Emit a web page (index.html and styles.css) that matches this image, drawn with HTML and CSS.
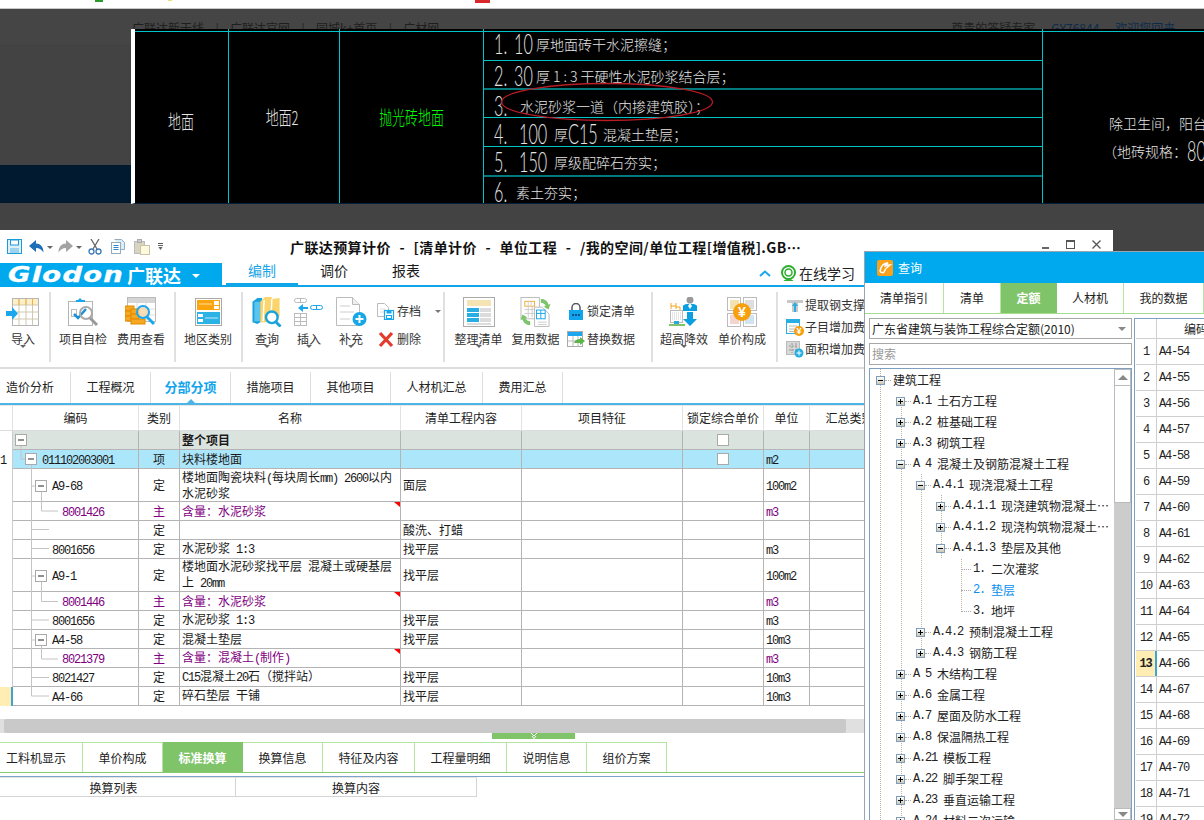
FILE: index.html
```html
<!DOCTYPE html>
<html lang="zh-CN">
<head>
<meta charset="utf-8">
<title>广联达预算计价</title>
<link rel="stylesheet" href="styles.css">
</head>
<body>
<div class="desktop">
  <div class="strip"><i class="dot g"></i><i class="dot y"></i><i class="dot r"></i></div>
  <div class="weblinks">
    <span>广联达新干线</span><b>|</b><span>广联达官网</span><b>|</b><span>同城k+首页</span><b>|</b><span>广材网</span>
    <span class="push">尊贵的答疑专家</span><span class="navy">GY76844</span><span class="navy">欢迎您回来</span>
  </div>
  <div class="navyblock"></div>

  <!-- CAD picture -->
  <div class="cad">
    <div class="cad-cell"><span class="cad-t w1">地面</span></div>
    <div class="cad-cell"><span class="cad-t w2">地面2</span></div>
    <div class="cad-cell"><span class="cad-t green">抛光砖地面</span></div>
    <div class="cad-list">
      <div class="cl r1"><span class="n n1">1.</span><span class="n n2">10</span>厚地面砖干水泥擦缝；</div>
      <div class="cl r2 thick"><span class="n n1">2.</span><span class="n n2">30</span><span class="sm">厚1:3</span>干硬性水泥砂浆结合层；</div>
      <div class="cl r3"><span class="n n1">3.</span><span class="gap"></span>水泥砂浆一道（内掺建筑胶）；</div>
      <div class="cl r4"><span class="n n1 wd">4.</span><span class="n n3">100</span>厚<span class="n n3">C15</span>混凝土垫层；</div>
      <div class="cl r5 thick"><span class="n n1 wd">5.</span><span class="n n3">150</span>厚级配碎石夯实；</div>
      <div class="cl r6"><span class="n n1">6.</span><span class="gap2"></span>素土夯实；</div>
    </div>
    <div class="cad-note">
      <div>除卫生间，阳台</div>
      <div class="note2">（地砖规格：<span class="n n2">80</span></div>
    </div>
    <svg class="ring" width="216" height="42" viewBox="0 0 216 42"><ellipse cx="108" cy="21" rx="105.500" ry="18.500" fill="none" stroke="#b81c24" stroke-width="1.300"/></svg>
  </div>

  <!-- main application window -->
  <div class="app">
    <div class="titlebar">
      <div class="quick">
        <svg width="15" height="15" viewBox="0 0 15 15"><rect x=".5" y=".5" width="14" height="14" fill="#dff0fa" stroke="#1b9ad6"/><rect x="3.500" y="1" width="8" height="5" fill="#fff" stroke="#1b9ad6"/><rect x="3" y="9" width="9" height="5" fill="#9fd2ee"/></svg>
        <svg class="q2" width="15" height="14" viewBox="0 0 15 14"><path d="M0 6 7 0v3.500c4 0 7.500 3 7.500 9-2-3-4-4.500-7.500-4.500V12z" fill="#1e6fb8"/></svg>
        <i class="mini"></i>
        <svg class="q3" width="15" height="14" viewBox="0 0 15 14"><path d="M15 6 8 0v3.500C4 3.500.5 6.500.5 12.500c2-3 4-4.500 7.500-4.500V12z" fill="#a3a3a3"/></svg>
        <i class="mini"></i>
        <svg class="q4" width="14" height="16" viewBox="0 0 14 16"><path d="M3 0 9 10M11 0 5 10" stroke="#666" stroke-width="1.300" fill="none"/><circle cx="3.500" cy="12.500" r="2.500" fill="none" stroke="#3d78b5" stroke-width="1.300"/><circle cx="10.500" cy="12.500" r="2.500" fill="none" stroke="#3d78b5" stroke-width="1.300"/></svg>
        <svg class="q5" width="15" height="15" viewBox="0 0 15 15"><path d="M3.500.5h7l3 3v7H10" fill="#d9eefb" stroke="#9ab"/><rect x=".5" y="3.500" width="9" height="11" fill="#fff" stroke="#9ab"/><path d="M2.500 6.500h5M2.500 8.500h5M2.500 10.500h5" stroke="#2a86c8"/></svg>
        <svg class="q6" width="16" height="16" viewBox="0 0 16 16"><rect x=".5" y="2.500" width="10" height="12" fill="#d8d4c0" stroke="#bbb"/><rect x="3.500" y=".5" width="4" height="3" fill="#ccc" stroke="#aaa"/><rect x="6.500" y="6.500" width="9" height="9" fill="#fdf9df" stroke="#c8c4a8"/></svg>
        <i class="more"></i>
      </div>
      <div class="apptitle">广联达预算计价 - [清单计价 - 单位工程 - /我的空间/单位工程[增值税].GB…</div>
      <div class="winctl"><i class="wmin"></i><i class="wmax"></i><svg width="9" height="9" viewBox="0 0 9 9"><path d="M.5.500l8 8M8.500.500l-8 8" stroke="#555" stroke-width="1.300"/></svg></div>
    </div>

    <div class="menu">
      <div class="logo"><span class="logo-en">Glodon</span><span class="logo-cn">广联达</span><i class="logo-caret"></i></div>
      <div class="mtab on">编制</div><div class="mtab">调价</div><div class="mtab">报表</div>
      <div class="learn">
        <svg width="12" height="7" viewBox="0 0 12 7"><path d="M1 6 6 1.500 11 6" fill="none" stroke="#1aa7ee" stroke-width="2"/></svg>
        <svg width="17" height="17" viewBox="0 0 17 17"><circle cx="8.500" cy="7.500" r="6.500" fill="none" stroke="#2fae2f" stroke-width="2"/><circle cx="8.500" cy="7.500" r="3.500" fill="none" stroke="#2fae2f" stroke-width="1.500"/><path d="M3.500 16c1-2.500 9-2.500 10 0z" fill="#2fae2f"/></svg>
        <span>在线学习</span>
      </div>
    </div>

    <div class="ribbon">
      <div class="grp g1">
        <div class="big dd w46"><svg width="34" height="30" viewBox="0 0 34 30"><rect x="6.500" y="1.500" width="26" height="27" fill="#fff" stroke="#b5b5b5"/><rect x="7" y="2" width="25" height="6" fill="#fdf0c8"/><path d="M6.500 8h26M6.500 15h26M6.500 22h26M13 2v26M20 2v26M26.500 2v26" stroke="#d0c8b0" fill="none"/><path d="M7 6.500h-0M13 2v6M20 2v6M26.500 2v6" stroke="#f5b13c"/><path d="M0 14h6v-4l6 6.500L6 23v-4H0z" fill="#1aa7ee"/></svg><span>导入</span></div>
      </div>
      <div class="grp g2">
        <div class="big w58"><svg width="32" height="30" viewBox="0 0 32 30"><rect x="1.500" y="4.500" width="24" height="24" fill="#fff" stroke="#b5b5b5"/><path d="M10 4l3-3 3 3z" fill="#1aa7ee"/><rect x="9" y="3" width="9" height="2" fill="#1aa7ee"/><rect x="4.500" y="12.500" width="5" height="7" fill="none" stroke="#bbb"/><path d="M7 17l4 4 8-9" fill="none" stroke="#1a8fd8" stroke-width="2.500"/><circle cx="19" cy="16" r="6" fill="none" stroke="#aaa" stroke-width="2"/><path d="M23 21l7 7" stroke="#999" stroke-width="3"/></svg><span>项目自检</span></div>
        <div class="big w58"><svg width="32" height="30" viewBox="0 0 32 30"><rect x="2.500" y=".5" width="28" height="24" fill="#fff" stroke="#bbb"/><rect x="3" y="1" width="27" height="5" fill="#d5d5d5"/><path d="M2 12h28M2 18h28M12 6v18M21 6v18" stroke="#ddd"/><rect x="0" y="9" width="9" height="5" fill="#f7a823" stroke="#e08a00"/><rect x="0" y="14" width="9" height="5" fill="#f7a823" stroke="#e08a00"/><rect x="0" y="19" width="9" height="5" fill="#f7a823" stroke="#e08a00"/><rect x="6" y="12" width="8" height="5" fill="#f7a823" stroke="#e08a00"/><rect x="6" y="17" width="8" height="5" fill="#f7a823" stroke="#e08a00"/><rect x="6" y="22" width="14" height="5" fill="#f7a823" stroke="#e08a00"/><circle cx="18" cy="15" r="6" fill="#f7d6a6" fill-opacity=".8" stroke="#1aa7ee" stroke-width="2"/><path d="M22 20l7 7" stroke="#1aa7ee" stroke-width="3"/></svg><span>费用查看</span></div>
      </div>
      <div class="grp g3">
        <div class="big w58"><svg width="27" height="30" viewBox="0 0 27 30"><rect x=".5" y="1.500" width="26" height="27" fill="#fff" stroke="#aaa"/><rect x="2" y="3" width="23" height="10" fill="#fca40d"/><rect x="19" y="4" width="5" height="4" fill="#fff"/><rect x="19" y="9" width="5" height="3" fill="#fff"/><path d="M4 7h13" stroke="#fde0a0"/><rect x="2" y="15" width="23" height="12" fill="#2bb3e6"/><rect x="3" y="17" width="5" height="3" fill="#fff"/><rect x="3" y="22" width="5" height="3" fill="#fff"/><path d="M10 21h13" stroke="#bfe9f8"/></svg><span>地区类别</span></div>
      </div>
      <div class="grp g4">
        <div class="big dd w42"><svg width="32" height="31" viewBox="0 0 32 31"><path d="M1 5 6 1h5v24l-5 3-5-2z" fill="#19a3dd"/><path d="M3 5h6v20H3z" fill="#5cc5ee"/><path d="M9 5l5-5h7v2l8-1v19l-8 6H9z" fill="#fbd46c"/><path d="M21 2l-1 24M13 3l-1 22" stroke="#fff" stroke-width="1.500" fill="none"/><circle cx="21" cy="21" r="6" fill="#fff" stroke="#19a3dd" stroke-width="2.500"/><path d="M25 25.500l5 5" stroke="#19a3dd" stroke-width="3"/></svg><span>查询</span></div>
        <div class="big dd w42"><svg width="30" height="30" viewBox="0 0 30 30"><rect x=".5" y="1.500" width="12" height="4" rx="2" fill="#fff" stroke="#bbb"/><path d="M6.500 1.500v4" stroke="#bbb"/><path d="M4 11l5-4v3h5v2H9v3z" fill="#1aa7ee"/><rect x="16.500" y="8.500" width="12" height="4" rx="2" fill="#fff" stroke="#1aa7ee"/><path d="M22.500 8.500v4" stroke="#1aa7ee"/><rect x=".5" y="16.500" width="12" height="12" fill="#fff" stroke="#bbb"/><path d="M.5 20.500h12M.5 24.500h12M6.500 16.500v12" stroke="#bbb"/></svg><span>插入</span></div>
        <div class="big dd w42"><svg width="31" height="30" viewBox="0 0 31 30"><path d="M.5.500h16l7 7v21H.5z" fill="#fff" stroke="#bbb"/><path d="M16.500.5v7h7" fill="#eee" stroke="#bbb"/><path d="M4 9h10M4 15h14M4 22h10" stroke="#e6e6e6" stroke-width="2"/><circle cx="23.500" cy="22" r="7" fill="#17a7e6"/><path d="M23.500 18v8M19.500 22h8" stroke="#fff" stroke-width="2"/></svg><span>补充</span></div>
        <div class="col2 c377">
          <div class="sm-btn"><svg width="18" height="17" viewBox="0 0 18 17"><path d="M.5.500h7l4 4v9H.5z" fill="#fff" stroke="#bbb"/><path d="M3 6h5M3 9h5" stroke="#ddd"/><rect x="7.500" y="7.500" width="9" height="9" fill="#fff" stroke="#1aa7ee" stroke-width="1.200"/><rect x="9.500" y="8" width="5" height="2.500" fill="#1aa7ee"/><rect x="9.500" y="12.500" width="5" height="3" fill="none" stroke="#1aa7ee"/></svg><span>存档</span><i class="mini2"></i></div>
          <div class="sm-btn"><svg width="18" height="17" viewBox="0 0 18 17"><path d="M3 2l12 13M15 2 3 15" stroke="#e33a2c" stroke-width="3.200" fill="none"/></svg><span>删除</span></div>
        </div>
      </div>
      <div class="grp g5">
        <div class="big dd w57"><svg width="32" height="30" viewBox="0 0 32 30"><rect x=".5" y=".5" width="31" height="29" fill="#fff" stroke="#aaa"/><rect x="4" y="3" width="24" height="6" fill="#f5e3b3"/><rect x="4" y="11" width="12" height="4" fill="#29aee3"/><rect x="4" y="16" width="12" height="4" fill="#29aee3"/><rect x="4" y="21" width="12" height="4" fill="#29aee3"/><rect x="17" y="11" width="11" height="4" fill="#dcdcdc"/><rect x="17" y="16" width="11" height="4" fill="#dcdcdc"/><rect x="17" y="21" width="11" height="4" fill="#dcdcdc"/><rect x="4" y="26" width="24" height="2" fill="#dcdcdc"/></svg><span>整理清单</span></div>
        <div class="big w57"><svg width="31" height="31" viewBox="0 0 31 31"><rect x=".5" y=".5" width="19" height="22" fill="#fff" stroke="#bbb"/><rect x="4.500" y="4.500" width="10" height="5" fill="#fff" stroke="#f5ad2f"/><path d="M8 4v5M11 4v5M4 13h12M4 17h12M8 9v12M12 9v12" stroke="#ccc"/><path d="M14.500 10.500h8l7 7v13h-15z" fill="#fff" stroke="#bbb"/><rect x="16.500" y="13.500" width="9" height="9" fill="#fff" stroke="#1aa7ee"/><path d="M16.500 17h9M21 13.500v9" stroke="#1aa7ee"/><path d="M18 26h9M18 28.500h9" stroke="#ccc"/><path d="M21 2c4 0 7 2 8 6l2-1-2 6-5-3 2-1c-1-2-3-3-5-3z" fill="#7dc46a"/><path d="M10 29c-4 0-7-2-8-6l-2 1 2-6 5 3-2 1c1 2 3 3 5 3z" fill="#7dc46a"/></svg><span>复用数据</span></div>
        <div class="col2 c568">
          <div class="sm-btn"><svg width="18" height="17" viewBox="0 0 18 17"><path d="M5 7V4.500a4 4 0 0 1 8 0V7" fill="none" stroke="#556" stroke-width="1.500"/><rect x="2" y="7" width="14" height="10" fill="#10a5ec"/><path d="M5 12h8" stroke="#05518a" stroke-dasharray="2 1" stroke-width="2"/></svg><span>锁定清单</span></div>
          <div class="sm-btn"><svg width="18" height="17" viewBox="0 0 18 17"><rect x=".5" y=".5" width="15" height="15" fill="#fff" stroke="#aaa"/><rect x="1" y="1" width="14" height="4" fill="#1aa7ee"/><path d="M1 10h14M6 5v10M11 5v10" stroke="#bbb"/><path d="M7 12c1-3 3-4 6-4V6l5 4-5 4v-2c-2 0-4 0-6 0z" fill="#5cb548"/></svg><span>替换数据</span></div>
        </div>
      </div>
      <div class="grp g6">
        <div class="big dd w58"><svg width="30" height="30" viewBox="0 0 30 30"><path d="M2 6v6M7 6v6M2 9h5" stroke="#f5a623" fill="none"/><path d="M7 10h4v16" stroke="#f5a623" fill="none"/><rect x="1.500" y="13.500" width="12" height="12" fill="#fff" stroke="#bbb"/><path d="M3 16h9M3 18h9M3 20h9M3 22h9" stroke="#ccc" stroke-dasharray="1 1"/><rect x="5" y="24" width="5" height="3" fill="#2ba8db"/><path d="M0 28h16" stroke="#7dc46a" stroke-width="2"/><circle cx="21" cy="3" r="3.500" fill="#999"/><path d="M14 9c1-3 13-3 14 0v5H14z" fill="#0a9fe0"/><path d="M21 6l-2 3 2 3 2-3z" fill="#fff"/><path d="M18 15h6v7h4l-7 7-7-7h4z" fill="#0a9fe0"/></svg><span>超高降效</span></div>
        <div class="big w58"><svg width="30" height="30" viewBox="0 0 30 30"><rect x=".5" y=".5" width="13" height="13" fill="#fff" stroke="#bbb"/><rect x="16.500" y=".5" width="13" height="13" fill="#fff" stroke="#bbb"/><rect x=".5" y="16.500" width="13" height="13" fill="#fff" stroke="#bbb"/><rect x="16.500" y="16.500" width="13" height="13" fill="#fff" stroke="#bbb"/><rect x="3" y="3" width="9" height="9" fill="#f2e2b0"/><rect x="18" y="3" width="9" height="9" fill="#dedede"/><rect x="3" y="18" width="9" height="9" fill="#f3d4d0"/><rect x="18" y="18" width="9" height="9" fill="#cfe3f2"/><circle cx="15" cy="15" r="9" fill="#f79f0c"/><text x="15" y="19.500" text-anchor="middle" class="yen">¥</text></svg><span>单价构成</span></div>
      </div>
      <div class="grp g7">
        <div class="col3">
          <div class="sm-btn"><svg width="18" height="17" viewBox="0 0 18 17"><path d="M1 3h16v3h-5v9H6V6H1z" fill="#c8c8c8"/><path d="M9 5l3 4h-2v6H8V9H6z" fill="#29aee3"/></svg><span>提取钢支撑</span></div>
          <div class="sm-btn"><svg width="18" height="17" viewBox="0 0 18 17"><rect x=".5" y=".5" width="13" height="14" fill="#fff" stroke="#29aee3"/><rect x="1" y="1" width="13" height="3" fill="#29aee3"/><path d="M3 7h8M3 10h5M3 12.500h5" stroke="#bbb"/><circle cx="13" cy="12" r="5" fill="#f79f0c"/><text x="13" y="15" text-anchor="middle" class="yen2">¥</text></svg><span>子目增加费</span></div>
          <div class="sm-btn"><svg width="18" height="17" viewBox="0 0 18 17"><rect x=".5" y=".5" width="13" height="13" fill="#d8d8d8" stroke="#bbb"/><path d="M3 5h8M3 9h8M6 2v10M10 2v10" stroke="#999" stroke-dasharray="2 1"/><circle cx="13" cy="12" r="4.500" fill="#29aee3"/><path d="M13 9.500v5M10.500 12h5" stroke="#fff"/></svg><span>面积增加费</span></div>
        </div>
      </div>
    </div>

    <div class="tabs">
      <div class="tab first">造价分析</div><div class="tab">工程概况</div><div class="tab on">分部分项</div><div class="tab">措施项目</div><div class="tab">其他项目</div><div class="tab wide">人材机汇总</div><div class="tab">费用汇总</div>
    </div>

    <div class="grid-wrap">
      <table class="grid">
        <colgroup><col class="k0"><col class="k1"><col class="k2"><col class="k3"><col class="k4"><col class="k5"><col class="k6"><col class="k7"><col class="k8"></colgroup>
        <thead><tr><th></th><th>编码</th><th>类别</th><th>名称</th><th>清单工程内容</th><th>项目特征</th><th>锁定综合单价</th><th>单位</th><th>汇总类别</th></tr></thead>
        <tbody>
          <tr class="h19 whole"><td class="no"></td><td></td><td></td><td class="strong">整个项目</td><td></td><td></td><td class="ctr"><i class="chk"></i></td><td></td><td></td></tr>
          <tr class="h19 sel"><td class="no">1</td><td class="code i1">011102003001</td><td class="ctr">项</td><td>块料楼地面</td><td></td><td></td><td class="ctr"><i class="chk"></i></td><td class="code">m2</td><td></td></tr>
          <tr class="h33"><td class="no"></td><td class="code i2">A9-68</td><td class="ctr">定</td><td>楼地面陶瓷块料<span class="m">(</span>每块周长<span class="m">mm) 2600</span>以内<br>水泥砂浆</td><td>面层</td><td></td><td></td><td class="code">100m2</td><td></td></tr>
          <tr class="h19 pur"><td class="no"></td><td class="code i3">8001426</td><td class="ctr">主</td><td class="flag">含量：水泥砂浆</td><td></td><td></td><td></td><td class="code">m3</td><td></td></tr>
          <tr class="h19"><td class="no"></td><td class="code i2"></td><td class="ctr">定</td><td></td><td>酸洗、打蜡</td><td></td><td></td><td class="code"></td><td></td></tr>
          <tr class="h19"><td class="no"></td><td class="code i2">8001656</td><td class="ctr">定</td><td>水泥砂浆<span class="m"> 1:3</span></td><td>找平层</td><td></td><td></td><td class="code">m3</td><td></td></tr>
          <tr class="h33"><td class="no"></td><td class="code i2">A9-1</td><td class="ctr">定</td><td>楼地面水泥砂浆找平层<span class="m"> </span>混凝土或硬基层<br>上<span class="m"> 20mm</span></td><td>找平层</td><td></td><td></td><td class="code">100m2</td><td></td></tr>
          <tr class="h19 pur"><td class="no"></td><td class="code i3">8001446</td><td class="ctr">主</td><td class="flag">含量：水泥砂浆</td><td></td><td></td><td></td><td class="code">m3</td><td></td></tr>
          <tr class="h19"><td class="no"></td><td class="code i2">8001656</td><td class="ctr">定</td><td>水泥砂浆<span class="m"> 1:3</span></td><td>找平层</td><td></td><td></td><td class="code">m3</td><td></td></tr>
          <tr class="h19"><td class="no"></td><td class="code i2">A4-58</td><td class="ctr">定</td><td>混凝土垫层</td><td>找平层</td><td></td><td></td><td class="code">10m3</td><td></td></tr>
          <tr class="h19 pur"><td class="no"></td><td class="code i3">8021379</td><td class="ctr">主</td><td class="flag">含量：混凝土<span class="m">(</span>制作<span class="m">)</span></td><td></td><td></td><td></td><td class="code">m3</td><td></td></tr>
          <tr class="h19"><td class="no"></td><td class="code i2">8021427</td><td class="ctr">定</td><td><span class="m">C15</span>混凝土<span class="m">20</span>石（搅拌站）</td><td>找平层</td><td></td><td></td><td class="code">10m3</td><td></td></tr>
          <tr class="h19"><td class="no cur"></td><td class="code i2">A4-66</td><td class="ctr">定</td><td>碎石垫层<span class="m"> </span>干铺</td><td>找平层</td><td></td><td></td><td class="code">10m3</td><td></td></tr>
        </tbody>
      </table>
      <svg class="tree-lines" width="140" height="301" viewBox="0 0 140 301">
        <path d="M21 40v14h4.500M31.500 59.500V291M31.500 81h4M31.500 124.500H49M31.500 143.500H49M31.500 171h4M31.500 215H49M31.500 235h4M31.500 272.500H49M31.500 291H49M41.500 86.500V106H58M41.500 176.500v20H58M41.500 240.500V254H58" fill="none" stroke="#c4c4c4"/>
        <g fill="#fff" stroke="#aaa"><rect x="15.500" y="29.500" width="11" height="11"/><rect x="25.500" y="48.500" width="11" height="11"/><rect x="35.500" y="75.500" width="11" height="11"/><rect x="35.500" y="165.500" width="11" height="11"/><rect x="35.500" y="229.500" width="11" height="11"/></g>
        <path d="M18 35h6M28 54h6M38 81h6M38 171h6M38 235h6" stroke="#222" fill="none"/>
      </svg>
    </div>

    <div class="hscroll"><div class="thumb"></div></div>
    <div class="splitter"><div class="grip"><svg width="8" height="6" viewBox="0 0 8 6"><path d="M1 0l3 3 3-3M2 3l2 2.500L6 3" fill="none" stroke="#fff"/></svg></div></div>

    <div class="btabs">
      <div class="btab first">工料机显示</div><div class="btab">单价构成</div><div class="btab on">标准换算</div><div class="btab">换算信息</div><div class="btab wide">特征及内容</div><div class="btab wide">工程量明细</div><div class="btab">说明信息</div><div class="btab">组价方案</div>
    </div>
    <div class="subhead"><div class="sh a">换算列表</div><div class="sh b">换算内容</div></div>
  </div>

  <!-- query window -->
  <div class="query">
    <div class="qtitle">
      <svg width="16" height="16" viewBox="0 0 16 16"><rect width="16" height="16" rx="2" fill="#f9a11b"/><path d="M3 11c1-5 4-8 8-8-2 1-3 2-3 3 2-1 3-1 5-1-3 2-5 4-6 7-1 1-3 1-4-1z" fill="none" stroke="#fff" stroke-width="1.500"/></svg>
      <span>查询</span>
    </div>
    <div class="qtabs"><div class="qt w79">清单指引</div><div class="qt w57">清单</div><div class="qt w56 on">定额</div><div class="qt w67">人材机</div><div class="qt w80">我的数据</div></div>
    <div class="qbody">
      <div class="qleft">
        <div class="combo"><span>广东省建筑与装饰工程综合定额(2010)</span><i></i></div>
        <div class="search">搜索</div>
        <div class="treebox">
          <svg class="dots" width="100" height="460" viewBox="0 0 100 460"><path d="M10.500 0V452M31.500 32V452M51.500 105V285M71.500 126V190M91.500 190V242" fill="none" stroke="#b9b4a0" stroke-dasharray="1 1"/></svg>
          <div class="tree">
            <div class="node t0"><i class="ex minus"></i>建筑工程</div>
            <div class="node t1"><i class="ex"></i><span class="m">A.1 </span>土石方工程</div>
            <div class="node t1"><i class="ex"></i><span class="m">A.2 </span>桩基础工程</div>
            <div class="node t1"><i class="ex"></i><span class="m">A.3 </span>砌筑工程</div>
            <div class="node t1"><i class="ex minus"></i><span class="m">A 4 </span>混凝土及钢筋混凝土工程</div>
            <div class="node t2"><i class="ex minus"></i><span class="m">A.4.1 </span>现浇混凝土工程</div>
            <div class="node t3"><i class="ex"></i><span class="m">A.4.1.1 </span>现浇建筑物混凝土…</div>
            <div class="node t3"><i class="ex"></i><span class="m">A.4.1.2 </span>现浇构筑物混凝土…</div>
            <div class="node t3"><i class="ex minus"></i><span class="m">A.4.1.3 </span>垫层及其他</div>
            <div class="node leaf"><span class="m">1. </span>二次灌浆</div>
            <div class="node leaf cur"><span class="m">2. </span>垫层</div>
            <div class="node leaf"><span class="m">3. </span>地坪</div>
            <div class="node t2"><i class="ex"></i><span class="m">A.4.2 </span>预制混凝土工程</div>
            <div class="node t2"><i class="ex"></i><span class="m">A.4.3 </span>钢筋工程</div>
            <div class="node t1"><i class="ex"></i><span class="m">A 5 </span>木结构工程</div>
            <div class="node t1"><i class="ex"></i><span class="m">A.6 </span>金属工程</div>
            <div class="node t1"><i class="ex"></i><span class="m">A.7 </span>屋面及防水工程</div>
            <div class="node t1"><i class="ex"></i><span class="m">A.8 </span>保温隔热工程</div>
            <div class="node t1"><i class="ex"></i><span class="m">A.21 </span>模板工程</div>
            <div class="node t1"><i class="ex"></i><span class="m">A.22 </span>脚手架工程</div>
            <div class="node t1"><i class="ex"></i><span class="m">A.23 </span>垂直运输工程</div>
            <div class="node t1"><i class="ex"></i><span class="m">A.24 </span>材料二次运输</div>
          </div>
          <div class="vscroll">
            <div class="vbtn"><i class="up"></i></div>
            <div class="vthumb"></div>
            <div class="vtrack"></div>
            <div class="vbtn dn"><i class="down"></i></div>
          </div>
        </div>
      </div>
      <div class="qright">
        <div class="qrow head"><div class="qn"></div><div class="qc">编码</div></div>
        <div class="qrow"><div class="qn">1</div><div class="qc m">A4-54</div></div>
        <div class="qrow"><div class="qn">2</div><div class="qc m">A4-55</div></div>
        <div class="qrow"><div class="qn">3</div><div class="qc m">A4-56</div></div>
        <div class="qrow"><div class="qn">4</div><div class="qc m">A4-57</div></div>
        <div class="qrow"><div class="qn">5</div><div class="qc m">A4-58</div></div>
        <div class="qrow"><div class="qn">6</div><div class="qc m">A4-59</div></div>
        <div class="qrow"><div class="qn">7</div><div class="qc m">A4-60</div></div>
        <div class="qrow"><div class="qn">8</div><div class="qc m">A4-61</div></div>
        <div class="qrow"><div class="qn">9</div><div class="qc m">A4-62</div></div>
        <div class="qrow"><div class="qn">10</div><div class="qc m">A4-63</div></div>
        <div class="qrow"><div class="qn">11</div><div class="qc m">A4-64</div></div>
        <div class="qrow"><div class="qn">12</div><div class="qc m">A4-65</div></div>
        <div class="qrow"><div class="qn hot">13</div><div class="qc m">A4-66</div></div>
        <div class="qrow"><div class="qn">14</div><div class="qc m">A4-67</div></div>
        <div class="qrow"><div class="qn">15</div><div class="qc m">A4-68</div></div>
        <div class="qrow"><div class="qn">16</div><div class="qc m">A4-69</div></div>
        <div class="qrow"><div class="qn">17</div><div class="qc m">A4-70</div></div>
        <div class="qrow"><div class="qn">18</div><div class="qc m">A4-71</div></div>
        <div class="qrow"><div class="qn">19</div><div class="qc m">A4-72</div></div>
      </div>
    </div>
  </div>
</div>
</body>
</html>
```

FILE: styles.css
```css
* { box-sizing: border-box; }
html, body { margin: 0; padding: 0; height: 100%; }
body { overflow: hidden; font: 12px/16px "Noto Sans CJK SC", "Liberation Sans", sans-serif; color: #1a1a1a; background: #434343; }
i { display: block; font-style: normal; }
svg { display: block; flex: none; }

.desktop { position: relative; width: 1204px; height: 820px; overflow: hidden; background: #434343; }
.strip { position: relative; height: 9px; background: #fff; border-bottom: 1px solid #c8c8c8; }
.dot { position: absolute; top: 0; height: 2px; }
.dot.g { left: 95px; width: 8px; background: #2a9a2a; }
.dot.y { left: 168px; width: 4px; height: 1px; background: #e8e070; }
.dot.r { left: 475px; width: 15px; height: 3px; background: #d8282c; }
.weblinks { display: flex; height: 37px; padding: 11px 0 0 132px; background: #454545; border-bottom: 1px solid #414141; color: #1e1e1e; line-height: 16px; }
.weblinks b { width: 26px; font-weight: 400; text-align: center; color: #222; }
.weblinks .push { margin-left: 512px; }
.weblinks .navy { margin-left: 16px; color: #0c2a4a; }
.navyblock { position: absolute; left: 0; top: 165px; width: 131px; height: 38px; background: #021a30; }

/* CAD picture */
.cad { position: absolute; left: 131px; top: 29px; width: 1073px; height: 175px; display: grid; grid-template-columns: 94px 111px 144px 559px 161px; grid-template-rows: 174px; background: #000; border-left: 4px solid #fff; border-bottom: 1px solid #02203a; color: #e4e4e4; font-weight: 300; overflow: hidden; }
.cad::before { content: ""; position: absolute; left: 0; right: 0; top: 2px; height: 1px; background: #00c4c8; }
.cad-cell { display: flex; align-items: center; justify-content: center; border-right: 1px solid #00c4c8; }
.cad-t { display: block; font-size: 19px; line-height: 20px; transform: scaleX(.68); white-space: nowrap; }
.cad-t.w1 { margin-top: 9px; }
.cad-t.w2 { margin-top: 1px; margin-right: 4px; }
.green { color: #00ff00; margin-top: 1px; }
.cad-list { display: flex; flex-direction: column; padding-top: 3px; border-right: 1px solid #00c4c8; }
.cl { display: flex; align-items: center; height: 29px; padding: 2px 0 0 10px; font-size: 14px; white-space: nowrap; border-bottom: 1px solid #00c4c8; }
.cl.r1 { padding: 0 0 5px 10px; }
.cl.r3 { height: 28px; padding-top: 4px; }
.cl.r4 { padding-top: 4px; }
.cl.r5 { height: 30px; }
.cl.r6 { height: 27px; border-bottom: 0; }
.cl.thick { border-bottom: 2px solid #007a7c; }
.n { display: inline-block; flex: none; font: 300 27px/28px "Lato", "Liberation Sans", sans-serif; transform: scaleX(.6); transform-origin: 0 50%; }
.n1 { width: 20px; }
.n1.wd { width: 25px; }
.n2 { width: 32px; margin-right: -10px; }
.n3 { width: 47px; margin-right: -12px; }
.sm { font-size: 14px; letter-spacing: 3px; }
.gap { width: 6px; flex: none; }
.gap2 { width: 2px; flex: none; }
.cad-note { padding: 81px 0 0 66px; font-size: 14px; line-height: 27px; white-space: nowrap; }
.note2 { display: flex; align-items: center; margin-left: -6px; }
.ring { position: absolute; left: 364px; top: 52px; }

/* app window */
.app { position: absolute; left: 0; top: 230px; width: 1113px; height: 590px; background: #fff; display: flex; flex-direction: column; }
.titlebar { position: relative; display: flex; align-items: center; height: 33px; flex: none; }
.quick { display: flex; align-items: center; width: 290px; padding-left: 7px; }
.q2 { margin-left: 7px; }
.q3 { margin-left: 5px; }
.q4 { margin-left: 6px; }
.q5 { margin-left: 9px; }
.q6 { margin-left: 8px; }
.mini { width: 0; height: 0; margin-left: 3px; margin-top: 2px; border: 3px solid transparent; border-top: 3px solid #666; border-bottom: 0; }
.more { width: 5px; height: 7px; margin-left: 8px; border-top: 1px solid #555; background: linear-gradient(#fff 0 1px, #666 1px 2px, #fff 2px 3px, #666 3px); clip-path: polygon(0 0, 100% 0, 100% 50%, 50% 100%, 0 50%); }
.apptitle { font-weight: 700; font-size: 14px; letter-spacing: .4px; color: #111; white-space: nowrap; word-spacing: 5px; }
.winctl { position: absolute; right: 12px; top: 10px; display: flex; align-items: center; gap: 17px; }
.wmin { width: 7px; height: 2px; background: #666; margin-top: 6px; }
.wmax { width: 9px; height: 9px; border: 1px solid #555; border-top-width: 2px; }

.menu { display: flex; height: 24px; flex: none; padding-right: 258px; border-bottom: 2px solid #0ea5e9; }
.logo { display: flex; align-items: center; width: 222px; height: 24px; background: #00a9ee; color: #fff; flex: none; padding-left: 8px; }
.logo-en { display: block; width: 119px; font: italic 700 21px/22px "DejaVu Sans", sans-serif; letter-spacing: 1px; white-space: nowrap; transform: scaleX(1.3); transform-origin: 0 50%; -webkit-text-stroke: .4px #fff; }
.logo-cn { font-size: 18px; font-weight: 700; line-height: 22px; white-space: nowrap; }
.logo-caret { margin-left: 11px; margin-top: 1px; border: 4px solid transparent; border-top: 4px solid #fff; border-bottom: 0; }
.mtab { width: 72px; text-align: center; font-size: 14px; line-height: 14px; height: 22px; }
.logo + .mtab { margin-left: 4px; }
.mtab.on { color: #19a5e8; border-bottom: 2px solid #0ea5e9; }
.learn { display: flex; align-items: center; margin-left: auto; height: 20px; font-size: 14px; gap: 9px; color: #222; }
.learn span { margin-left: -7px; }

.ribbon { display: flex; height: 82px; flex: none; border-bottom: 2px solid #ddd; }
.grp { display: flex; height: 70px; margin-top: 5px; border-right: 2px solid #e0e0e0; flex: none; padding-top: 5px; }
.g1 { width: 51px; }
.g2 { width: 125px; padding-left: 3px; }
.g3 { width: 67px; padding-left: 3px; }
.g4 { width: 202px; padding-left: 3px; }
.g5 { width: 208px; padding-left: 5px; }
.g6 { width: 125px; padding-left: 2px; }
.g7 { width: 110px; border-right: 0; padding-left: 8px; }
.big { position: relative; display: flex; flex-direction: column; align-items: center; flex: none; color: #333; }
.big svg { height: 30px; }
.big span { margin-top: 4px; white-space: nowrap; }
.w46 { width: 46px; }
.w42 { width: 42px; }
.w57 { width: 57px; }
.w58 { width: 58px; }
.dd::after { content: ""; position: absolute; left: 50%; margin-left: -3px; top: 48px; border: 3px solid transparent; border-top: 3px solid #666; border-bottom: 0; }
.col2 { display: flex; flex-direction: column; gap: 8px; padding-top: 4px; }
.c377 { margin-left: 5px; }
.c568 { margin-left: 3px; }
.col3 { display: flex; flex-direction: column; gap: 2px; margin-top: -2px; }
.sm-btn { display: flex; align-items: center; gap: 2px; height: 20px; color: #333; white-space: nowrap; }
.col3 .sm-btn { gap: 1px; }
.mini2 { margin-left: 12px; border: 3px solid transparent; border-top: 3px solid #777; border-bottom: 0; }
.yen { font: 700 14px "Liberation Sans", sans-serif; fill: #fff; }
.yen2 { font: 700 9px "Liberation Sans", sans-serif; fill: #fff; }

.tabs { display: flex; height: 36px; flex: none; padding-top: 3px; border-bottom: 2px solid #4db5e5; }
.tab { position: relative; width: 80px; text-align: center; line-height: 30px; border-right: 1px solid #ddd; color: #222; flex: none; }
.tab.first { width: 71px; padding-right: 10px; }
.tab.wide { width: 92px; }
.tab.on { color: #12a5ee; font-weight: 700; font-size: 13px; }
.tab.on::after { content: ""; position: absolute; left: 50%; margin-left: -4px; bottom: 0; border: 4px solid transparent; border-bottom: 4px solid #4db5e5; border-top: 0; }

.grid-wrap { position: relative; flex: none; height: 301px; overflow: hidden; }
.grid { table-layout: fixed; width: 890px; border-collapse: separate; border-spacing: 0; }
.k0 { width: 13px; } .k1 { width: 126px; } .k2 { width: 41px; } .k3 { width: 221px; } .k4 { width: 121px; } .k5 { width: 161px; } .k6 { width: 81px; } .k7 { width: 46px; } .k8 { width: 80px; }
.grid th { height: 26px; padding: 0; font-weight: 400; color: #222; border-right: 1px solid #e2e2e2; border-bottom: 1px solid #ddd; border-top: 1px solid #e6e6e6; white-space: nowrap; overflow: hidden; }
.grid td { padding: 0 0 0 2px; border-right: 1px solid #b4b4b4; border-bottom: 1px solid #b4b4b4; line-height: 14px; white-space: nowrap; overflow: hidden; }
.grid td.no { padding: 3px 0 0; border-bottom: 0; border-right: 1px solid #ccc; background: #fff; font: 12px/12px "Liberation Mono", monospace; letter-spacing: -1.200px; }
.grid td.no.cur { background: #ffedb3; border-right: 2px solid #3ba5d8; }
.h19 td { height: 19px; }
.h33 td { height: 33px; }
.whole td { background: #dbe3df; }
.sel td { background: #ace6fa; }
.strong { font-weight: 700; }
.grid td.ctr { text-align: center; padding: 0; }
.grid td.code { padding-top: 3px; font: 12px/14px "Liberation Mono", monospace; letter-spacing: -1.200px; }
.grid td.i1 { padding-left: 29px; }
.grid td.i2 { padding-left: 39px; }
.grid td.i3 { padding-left: 49px; }
.pur td { color: #800080; }
.grid td.flag { position: relative; }
.grid td.flag::after { content: ""; position: absolute; right: 0; top: 0; border-top: 5px solid #f00; border-left: 6px solid transparent; }
.chk { width: 12px; height: 12px; margin: 0 auto; background: #fff; border: 1px solid #aaa; }
.tree-lines { position: absolute; left: 0; top: 0; }

.hscroll { flex: none; width: 864px; height: 14px; margin-top: 13px; padding-left: 4px; background: #e0e0e0; }
.thumb { width: 842px; height: 14px; background: #c9c9c9; border-radius: 2px; }
.splitter { flex: none; height: 6px; margin-bottom: 3px; }
.grip { display: flex; justify-content: center; width: 83px; height: 6px; margin-left: 492px; background: #80c46a; }
.btabs { display: flex; flex: none; width: 864px; height: 31px; border-bottom: 1px solid #85cc70; }
.btab { width: 80px; flex: none; height: 30px; line-height: 30px; text-align: center; border-top: 1px solid #b5e5a0; border-right: 1px solid #b5e5a0; color: #222; }
.btab.first { width: 83px; padding-right: 10px; }
.btab.wide { width: 92px; }
.btab.on { background: #80c46a; color: #fff; font-weight: 700; border-color: #80c46a; }
.subhead { display: flex; flex: none; width: 864px; height: 24px; margin-top: 3px; border-top: 1px solid #7ba4c8; }
.sh { height: 20px; line-height: 19px; text-align: center; border-right: 1px solid #d4d4d4; border-bottom: 1px solid #d4d4d4; border-top: 1px solid #e4e4e4; color: #222; }
.sh.a { width: 236px; padding-right: 8px; }
.sh.b { width: 241px; }

/* query window */
.query { position: absolute; left: 864px; top: 251px; width: 340px; height: 569px; background: #fff; border-left: 1px solid #9aa5ad; border-top: 1px solid #9aa5ad; display: flex; flex-direction: column; overflow: hidden; }
.qtitle { display: flex; align-items: center; flex: none; height: 31px; padding-left: 12px; gap: 5px; background: #00a9ee; color: #fff; }
.qtabs { display: flex; flex: none; height: 31px; border-bottom: 1px solid #a6dc90; }
.qt { height: 30px; line-height: 30px; text-align: center; flex: none; border-right: 1px solid #b5e5a0; color: #222; }
.qt.on { background: #80c46a; color: #fff; font-weight: 700; border-color: #80c46a; }
.w79 { width: 79px; } .w56 { width: 56px; } .w67 { width: 67px; } .w80 { width: 80px; }
.qt.w57 { width: 57px; }
.qbody { display: flex; flex: 1; padding: 4px 0 0 4px; gap: 2px; min-height: 0; }
.qleft { width: 263px; flex: none; display: flex; flex-direction: column; }
.combo { position: relative; flex: none; height: 21px; line-height: 19px; padding-left: 2px; border: 1px solid #a8a8a8; color: #222; }
.combo i { position: absolute; right: 5px; top: 8px; border: 4px solid transparent; border-top: 4px solid #888; border-bottom: 0; }
.search { flex: none; height: 22px; margin-top: 4px; line-height: 20px; padding-left: 2px; border: 1px solid #a8a8a8; color: #999; }
.treebox { position: relative; flex: 1; display: flex; margin-top: 3px; min-height: 0; border: 1px solid #7e9fbf; border-bottom: 0; overflow: hidden; }
.dots { position: absolute; left: 0; top: 0; }
.tree { position: relative; flex: 1; padding-top: .5px; min-width: 0; }
.node { position: relative; display: flex; align-items: center; height: 21px; white-space: nowrap; color: #222; }
.m { font: 12px/14px "Liberation Mono", monospace; letter-spacing: -1.200px; white-space: pre; }
.ex { position: relative; width: 9px; height: 9px; margin-right: 8px; flex: none; border: 1px solid #7f9db9; background: linear-gradient(#000, #000) center / 5px 1px no-repeat, linear-gradient(#000, #000) center / 1px 5px no-repeat, linear-gradient(#fff, #ccc8b8); }
.ex.minus { background: linear-gradient(#000, #000) center / 5px 1px no-repeat, linear-gradient(#fff, #ccc8b8); }
.ex::before { content: ""; position: absolute; left: 8px; top: 3px; width: 6px; border-top: 1px dotted #aaa; }
.t0 { padding-left: 6px; }
.t1 { padding-left: 26px; }
.t2 { padding-left: 46px; }
.t3 { padding-left: 66px; }
.leaf { padding-left: 103px; }
.leaf::before { content: ""; position: absolute; left: 91px; top: 10px; width: 10px; border-top: 1px dotted #aaa; }
.leaf.cur { color: #0a8fee; }
.vscroll { display: flex; flex-direction: column; flex: none; width: 17px; height: 451px; background: #ccc; }
.vbtn { flex: none; height: 17px; background: #fff; border: 1px solid #bbb; display: flex; align-items: center; justify-content: center; }
.vbtn.dn { height: 12px; }
.up { border: 5px solid transparent; border-bottom: 5px solid #888; border-top: 0; }
.down { border: 5px solid transparent; border-top: 5px solid #888; border-bottom: 0; }
.vthumb { flex: none; height: 117px; background: #fff; border: 1px solid #bbb; border-top: 0; }
.vtrack { flex: 1; }
.qright { flex: 1; min-width: 0; border-left: 1px solid #7e9fbf; border-top: 1px solid #7e9fbf; padding-left: 1px; overflow: hidden; }
.qrow { display: flex; height: 26px; border-bottom: 1px solid #cfcfcf; }
.qrow.head { height: 20px; }
.qn { width: 21px; flex: none; text-align: center; font: 12px/26px "Liberation Mono", monospace; letter-spacing: -1.200px; border-right: 1px solid #cfcfcf; color: #222; }
.qrow.head .qc { width: 78px; padding: 0; line-height: 19px; text-align: center; white-space: nowrap; flex: none; }
.qc { flex: 1; padding-left: 2px; color: #222; }
.qc.m { line-height: 26px; }
.qn.hot { background: #ffedb3; font-weight: 700; border-right: 2px solid #3ba5d8; }
```
